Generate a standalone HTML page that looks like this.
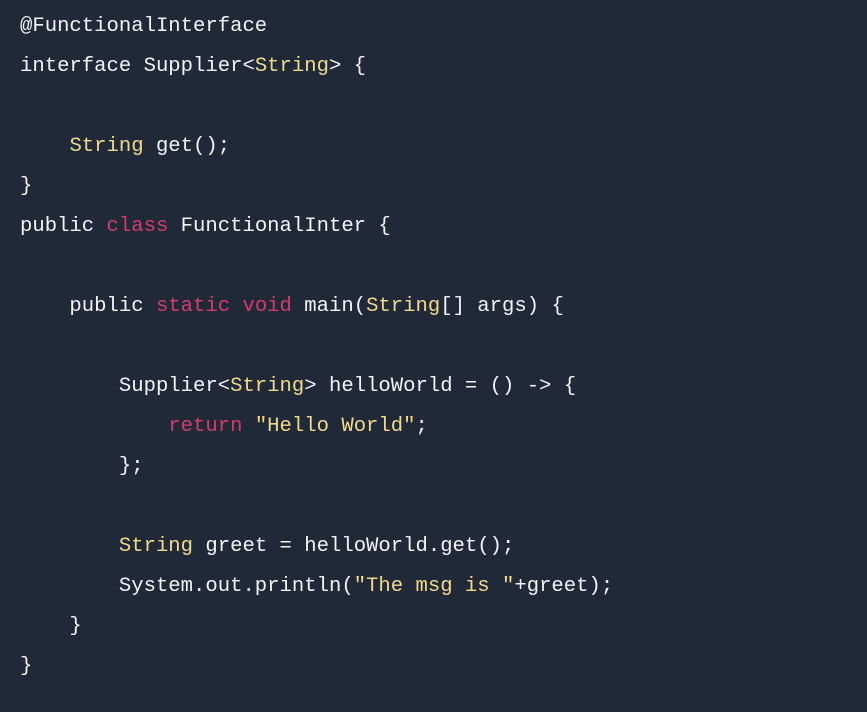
<!DOCTYPE html>
<html><head><style>
html,body{margin:0;padding:0;background:#1f2937;width:867px;height:712px;overflow:hidden}
pre{margin:0;padding:7px 0 0 20px;font-family:"Liberation Mono",monospace;font-size:20.6px;line-height:40px;color:#f3f4f6}
.k{color:#d63a6c}.y{color:#f2d98a}
</style></head><body><pre>@FunctionalInterface
interface Supplier&lt;<span class="y">String</span>&gt; {

    <span class="y">String</span> get();
}
public <span class="k">class</span> FunctionalInter {

    public <span class="k">static</span> <span class="k">void</span> main(<span class="y">String</span>[] args) {

        Supplier&lt;<span class="y">String</span>&gt; helloWorld = () -&gt; {
            <span class="k">return</span> <span class="y">"Hello World"</span>;
        };

        <span class="y">String</span> greet = helloWorld.get();
        System.out.println(<span class="y">"The msg is "</span>+greet);
    }
}</pre></body></html>
